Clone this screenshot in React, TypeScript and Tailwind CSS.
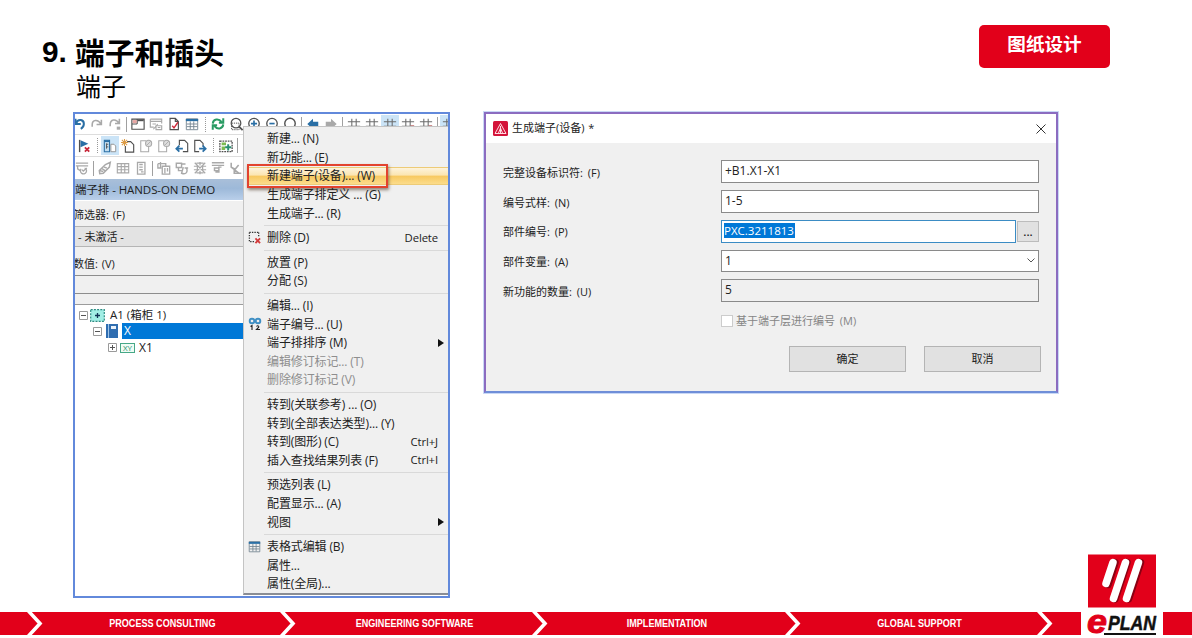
import { ReactNode } from "react";
import clsx from "clsx";

type IconName =
  | "undo" | "redo" | "redoList" | "layout" | "layoutOff" | "pageCheck" | "table" | "refresh" | "zoomArea" | "zoomIn" | "zoomOut"
  | "zoomFit" | "back" | "forward" | "grid" | "gridDot" | "flag" | "tree" | "newPage" | "pageOff" | "pageBack" | "pageNext" | "plc"
  | "filterOff" | "eraser" | "gridOff" | "device" | "copyOff" | "rotateOff" | "burst" | "alignOff" | "axis";

const GREY = "#a9a9a9";
const DARK = "#505050";
const BLUE = "#2a6fa5";

const hash = <path d="M5.5 2v12M10.5 2v12M1 5.5h14M1 10.5h14" stroke="#6b6b6b" strokeWidth="1.2" />;
const page = (color: string) => <path d="M3.5 1.5h6l3.500 3.500v9.500h-9.500zM9.500 1.500v3.500H13" stroke={color} strokeWidth="1.3" />;

const icons: Record<IconName, ReactNode> = {
  undo: <path d="M4 2v6h6M4.5 7.5C7 1 14 3 13.5 8.500c-.3 3-1.500 4-3.500 5" stroke={BLUE} strokeWidth="2.3" />,
  redo: <path d="M13 3v5.500H7.500M12.500 8C9 2 2.500 3 2.500 9v2" stroke={GREY} strokeWidth="1.8" />,
  redoList: (
    <>
      <path d="M13 2v5.500H8M12.500 7C9 1.500 2.500 2.500 2.500 9v1.500" stroke={GREY} strokeWidth="1.800" />
      <path d="M10 11h4v3.500h-4z" fill={GREY} />
    </>
  ),
  layout: (
    <>
      <path d="M1 2.500h14v11.500H1zM7 3v5M1 8h6" stroke={DARK} strokeWidth="1.300" />
      <path d="M7.500 3.800h7" stroke={DARK} strokeWidth="2" />
      <path d="M2 3.500h4.500V7H2z" fill="#e8a5a2" />
    </>
  ),
  layoutOff: <path d="M1.500 2.500h13v5M1.500 2.500v9h4M2 5h12M4 8h4M10 8l-5 6M8 10h6.500v4.500H8zM10 12h3" stroke={GREY} strokeWidth="1.300" />,
  pageCheck: (
    <>
      {page(DARK)}
      <path d="m6 10 2 2.500L12.500 6" stroke="#cf2b3b" strokeWidth="1.600" />
    </>
  ),
  table: (
    <>
      <path d="M1.500 2h13v12.500h-13zM6 5v9M10 5v9M2 8h12M2 11h12" stroke="#70818e" strokeWidth="1" />
      <path d="M1 3.500h14" stroke={BLUE} strokeWidth="2.500" />
    </>
  ),
  refresh: (
    <path d="M2 7.500C2.500 2 9 1.500 12 5.500M14 1.500V6.500H9M14 8.500C13.500 14 7 14.500 4 10.500M2 14.500v-5h5" stroke="#299b63" strokeWidth="2.300" />
  ),
  zoomArea: (
    <>
      <circle cx="8" cy="7" r="5.500" stroke={DARK} strokeWidth="1.400" />
      <path d="m11.500 11 4 4" stroke={DARK} strokeWidth="2" />
      <path d="M3 7h8.500v7.500H3z" stroke={DARK} strokeWidth="1.100" strokeDasharray="1.500 1" />
    </>
  ),
  zoomIn: (
    <>
      <circle cx="8" cy="7.500" r="6" stroke={DARK} strokeWidth="1.500" />
      <path d="M8 4v7M4.500 7.500h7" stroke={BLUE} strokeWidth="1.900" />
    </>
  ),
  zoomOut: (
    <>
      <circle cx="8" cy="7.500" r="6" stroke={DARK} strokeWidth="1.500" />
      <path d="M5 7.500h6" stroke={BLUE} strokeWidth="1.900" />
    </>
  ),
  zoomFit: <circle cx="8" cy="7.500" r="6" stroke={DARK} strokeWidth="1.600" />,
  back: <path d="M8 2 1.500 8 8 14v-3.500h6v-5H8z" fill={BLUE} />,
  forward: <path d="m8 2 6.500 6L8 14v-3.500H2v-5h6z" fill={GREY} />,
  grid: hash,
  gridDot: (
    <>
      {hash}
      <path d="M11 9.500h4v2h-4z" fill="#c96b6b" />
    </>
  ),
  flag: (
    <>
      <path d="M3 1v14" stroke={DARK} strokeWidth="1.600" />
      <path d="m4 1.500 9 4L4 9.500z" fill={BLUE} />
      <path d="m9 9.500 5 5M14 9.500l-5 5" stroke="#c8283a" strokeWidth="2" />
    </>
  ),
  tree: (
    <>
      <path d="M1.500 1.500h6v13h-6z" stroke={BLUE} fill="#c2dced" strokeWidth="1.200" />
      <path d="M1.500 2.500h6" stroke={BLUE} strokeWidth="2" />
      <path d="M4 5v6M4 6h2M4 9h2" stroke={DARK} />
      <path d="M9 6h3.500l2 2v6.500H9z" stroke="#8b8b8b" fill="#fff" />
    </>
  ),
  newPage: (
    <>
      <path d="M7 3h4l3.500 3.500v8.500H5V8" stroke={DARK} strokeWidth="1.300" />
      <path d="M4 0v8M0 4h8M1 1l6 6M7 1 1 7" stroke="#dc9b45" strokeWidth="1.200" />
    </>
  ),
  pageOff: (
    <>
      <path d="M8 2H2v12.500h9V9" stroke={GREY} strokeWidth="1.200" />
      <circle cx="11" cy="5" r="3.500" stroke={GREY} fill="#ddd" strokeWidth="1.200" />
      <path d="m8.500 7.500 5-5" stroke={GREY} />
    </>
  ),
  pageBack: (
    <>
      <path d="M5 7V1.500h6L14.500 5v9.500H9" stroke={DARK} strokeWidth="1.300" />
      <path d="M9 11H1.500M5 7.500 1.500 11 5 14.500" stroke={BLUE} strokeWidth="2" />
    </>
  ),
  pageNext: (
    <>
      <path d="M7 14.500H2v-13h6L11.500 5v3" stroke={DARK} strokeWidth="1.300" />
      <path d="M7 11h7.500M11 7.500l3.500 3.500-3.500 3.500" stroke={BLUE} strokeWidth="2" />
    </>
  ),
  plc: (
    <>
      <path d="M1 2.500h14v12H1z" stroke={DARK} strokeWidth="1.500" strokeDasharray="2 1" />
      <path d="M3 4h5v3H3zM3 8.500h4v4H3z" fill="#7dbb52" />
      <path d="M10.500 6v7M7 9.500h7" stroke="#278e70" strokeWidth="2.200" />
    </>
  ),
  filterOff: <path d="M1 2.500h14M1 5.500h14M3 6v3l3 2M7 9a3.500 3.500 0 1 0 4-1M8 10l1.500 1.500L13.500 8" stroke={GREY} strokeWidth="1.500" />,
  eraser: <path d="m1.500 11 7-7 5.500-2.500-1 5.500-7 7-4 .5zM5 9l3 2M7 7l3 1M2 11l4 1" stroke={GREY} strokeWidth="1.700" />,
  gridOff: <path d="M1.500 3h13v10.500h-13zM6 3v10M10 3v10M2 6.500h12M2 10h12" stroke={GREY} strokeWidth="1.300" />,
  device: <path d="M4 1.500h8.500v13.500H4zM6 4h4M6 7h4M6 10h4M8 12.500h3" stroke={GREY} strokeWidth="1.500" />,
  copyOff: <path d="M1 3h9v3M1 3v5h4M4 1v7M6 6h8.500v9H6zM9 8v6M12 8v4" stroke={GREY} strokeWidth="1.500" />,
  rotateOff: <path d="M1.500 2.500h6v5h-6zM4 8v3h5M7 3.500h5M9.500 7l-2 7c5.500 2 7.500-2 5.500-6M11 8h4" stroke={GREY} strokeWidth="1.600" />,
  burst: <path d="M2 2l12 12M14 2 2 14M8 1v4M8 11v4M1 6h4v4H1M15 6h-4v4h4M4 2.500h8M4 13.500h8" stroke={GREY} strokeWidth="1.400" />,
  alignOff: <path d="M1 2h14M1 5h14M4 8h5v3H4zM12 7H9v5.500H5" stroke={GREY} strokeWidth="1.700" />,
  axis: <path d="M2.500 2v5l9 7M2.500 7 7 9.500l4-5M6 9v5h8" stroke={GREY} strokeWidth="1.800" />,
};

function Icon({ name, active }: { name: IconName; active?: boolean }) {
  return (
    <span className={clsx("flex h-[19px] w-[18px] shrink-0 items-center justify-center", active && "bg-[#cbe4f7]")}>
      <svg viewBox="0 0 16 16" width="14" height="14" fill="none">
        {icons[name]}
      </svg>
    </span>
  );
}

function Bar({ wide }: { wide?: boolean }) {
  return (
    <span className={clsx("flex h-full shrink-0 items-center justify-center", wide ? "w-2" : "w-[5px]")}>
      <span className={clsx("h-[15px] border-l", wide ? "border-dotted border-[#999]" : "border-[#a0a0a0]")} />
    </span>
  );
}

type MenuEntry = { label: string; keys?: string; disabled?: boolean; submenu?: boolean; icon?: ReactNode; selected?: boolean };

const menu: MenuEntry[][] = [
  [
    { label: "新建... (N)" },
    { label: "新功能... (E)" },
    { label: "新建端子(设备)... (W)", selected: true },
    { label: "生成端子排定义 ... (G)" },
    { label: "生成端子... (R)" },
  ],
  [
    {
      label: "删除 (D)",
      keys: "Delete",
      icon: (
        <svg viewBox="0 0 14 14" width="13" height="13" fill="none">
          <path d="M1.500 1.500h10M1.500 1.500v10h6M11.500 1.500v5" stroke="#333" strokeWidth="1.400" strokeDasharray="1.500 1.200" />
          <path d="m8 8 5 5M13 8l-5 5" stroke="#d23a3a" strokeWidth="2" />
        </svg>
      ),
    },
  ],
  [{ label: "放置 (P)" }, { label: "分配 (S)" }],
  [
    { label: "编辑... (I)" },
    {
      label: "端子编号... (U)",
      icon: (
        <svg viewBox="0 0 14 14" width="14" height="14" fill="none">
          <circle cx="4" cy="4" r="2.300" stroke="#3f8fc4" strokeWidth="1.900" />
          <circle cx="10" cy="4" r="2.300" stroke="#3f8fc4" strokeWidth="1.900" />
          <path d="M2.500 9.500 4 8.500V13M8.500 9.500c1-1.500 3-.500 2 1l-2 2h3.500" stroke="#222" strokeWidth="1.100" />
        </svg>
      ),
    },
    { label: "端子排排序 (M)", submenu: true },
    { label: "编辑修订标记... (T)", disabled: true },
    { label: "删除修订标记 (V)", disabled: true },
  ],
  [
    { label: "转到(关联参考) ... (O)" },
    { label: "转到(全部表达类型)... (Y)" },
    { label: "转到(图形) (C)", keys: "Ctrl+J" },
    { label: "插入查找结果列表 (F)", keys: "Ctrl+I" },
  ],
  [{ label: "预选列表 (L)" }, { label: "配置显示... (A)" }, { label: "视图", submenu: true }],
  [
    {
      label: "表格式编辑 (B)",
      icon: (
        <svg viewBox="0 0 16 16" width="13" height="13" fill="none">
          {icons.table}
        </svg>
      ),
    },
    { label: "属性..." },
    { label: "属性(全局)..." },
  ],
];

function ContextMenu() {
  return (
    <div className="absolute top-3 left-[168px] h-[469px] w-[205px] border-t border-b-2 border-l border-[#c4c4c4] border-b-[#8a8d94] bg-[#f0f0f0] pt-[2.500px] pl-px text-[12px] tracking-[-0.120px] text-[#222]">
      {menu.map((group, i) => (
        <div key={i}>
          {i > 0 && (
            <div className="ml-[19px] flex h-[6px] items-center">
              <div className="h-px w-full bg-[#d9d9d9]" />
            </div>
          )}
          {group.map((item) => (
            <div
              key={item.label}
              className={clsx(
                "relative flex h-[18.6px] items-center leading-[18px] whitespace-pre",
                item.selected &&
                  "ml-[3px] border-y border-[#edcb77] bg-[linear-gradient(#fdf3dc_0%,#fbe5b1_45%,#f7c860_50%,#fbdc8c_100%)]",
                item.disabled && "text-[#8e8e8e]"
              )}
            >
              <span className={clsx("flex shrink-0 justify-center", item.selected ? "w-[19px]" : "mr-[3px] w-[19px]")}>{item.icon}</span>
              <span className="pt-px">{item.label}</span>
              {item.keys && <span className="mr-[10px] ml-auto text-[11.300px]">{item.keys}</span>}
              {item.submenu && (
                <svg className="mr-[4px] ml-auto" viewBox="0 0 6 8" width="6" height="8">
                  <path d="M0 0l6 4-6 4z" fill="#111" />
                </svg>
              )}
              {item.selected && (
                <span className="absolute -top-[4px] -left-px h-[24px] w-[141px] border-2 border-[#e2432f] shadow-[1px_2px_3px_rgba(80,60,40,0.6)]" />
              )}
            </div>
          ))}
        </div>
      ))}
    </div>
  );
}

function Toggle({ open }: { open?: boolean }) {
  return (
    <svg viewBox="0 0 9 9" width="9" height="9" fill="none" stroke="#9a9a9a">
      <path d="M.5.5h8v8h-8z" fill="#fff" />
      <path d={open ? "M2 4.500h5" : "M2 4.500h5M4.500 2v5"} stroke="#555" />
    </svg>
  );
}

function Navigator() {
  return (
    <section className="relative ml-[73px] h-[486px] w-[377px] shrink-0 overflow-hidden border-2 border-[#6289db] bg-white text-[12px] text-[#222]">
      <div className="-ml-[5px] flex h-[21px] w-[400px] items-center border-b border-[#ddd]">
        <Icon name="undo" /><Icon name="redo" /><Icon name="redoList" /><Bar />
        <Icon name="layout" /><Icon name="layoutOff" /><Icon name="pageCheck" /><Icon name="table" /><Bar wide />
        <Icon name="refresh" /><Icon name="zoomArea" /><Icon name="zoomIn" /><Icon name="zoomOut" /><Icon name="zoomFit" /><Bar />
        <Icon name="back" /><Icon name="forward" /><Bar />
        <Icon name="grid" /><Icon name="grid" /><Icon name="grid" active /><Icon name="gridDot" /><Icon name="gridDot" /><Bar />
        <Icon name="grid" active />
      </div>
      <div className="flex h-[22px] items-center border-b border-[#ddd]">
        <Icon name="flag" /><Bar wide />
        <Icon name="tree" active /><Icon name="newPage" /><Icon name="pageOff" /><Icon name="pageOff" /><Icon name="pageBack" /><Icon name="pageNext" />
        <Bar wide /><Icon name="plc" /><Bar />
      </div>
      <div className="-ml-0.5 flex h-[22px] items-center">
        <Icon name="filterOff" /><Bar /><Icon name="eraser" /><Icon name="gridOff" /><Icon name="device" /><Bar />
        <Icon name="copyOff" /><Icon name="rotateOff" /><Icon name="burst" /><Icon name="alignOff" /><Icon name="axis" />
      </div>

      <div className="w-[168px] bg-[#f0f0f0] whitespace-pre">
        <div className="h-[22px] border-b border-white bg-[linear-gradient(#a9bfd9,#9db9d9_45%,#b9cfea)] text-[11.500px] leading-[22px] tracking-[-0.080px]">
          端子排 - HANDS-ON DEMO
        </div>
        <div className="-ml-0.5 h-[25px] pt-[5px] text-[11px] leading-[18px] [word-spacing:1px]">筛选器: (F)</div>
        <div className="h-[21px] border-y border-[#b5b5b5] bg-[#e3e3e3] pl-[3px] text-[11px] leading-[20px]">- 未激活 -</div>
        <div className="-ml-0.5 h-[28px] pt-[8px] text-[11px] leading-[18px] [word-spacing:1px]">数值: (V)</div>
        <div className="h-[19px] border-y border-[#8d8d8d]" />
        <div className="h-[11px] border-b border-[#9c9c9c]" />
      </div>

      <div className="w-[168px] pt-[2px] text-[11.500px] leading-[16px]">
        <div className="flex h-4 items-center pl-[4px]">
          <Toggle open />
          <svg className="ml-[2px]" viewBox="0 0 15 13" width="15" height="13" fill="#a2eee5">
            <path d="M.7.7h13.600v11.600H.7z" stroke="#2e8c83" strokeWidth="1.200" strokeDasharray="2 1.200" />
            <path d="M7.500 4v5M5 6.500h5" stroke="#135" strokeWidth="1.300" />
          </svg>
          <span className="ml-[5px]">A1 (箱柜 1)</span>
        </div>
        <div className="flex h-4 items-center pl-[18px]">
          <Toggle open />
          <svg className="ml-[4px]" viewBox="0 0 12 14" width="12" height="14">
            <path d="M0 0h12v14H0z" fill="#2f6db0" />
            <path d="M2.500 0v14" stroke="#9dc3e8" />
            <path d="M5 2h5v3H5z" fill="#e8f1fa" />
          </svg>
          <span className="ml-[4px] h-4 flex-1 bg-[#0078d7] pl-[2px] text-[12px] text-white">X</span>
        </div>
        <div className="flex h-[17px] items-center pl-[33px]">
          <Toggle />
          <svg className="ml-[3px]" viewBox="0 0 15 10" width="15" height="10">
            <rect x=".5" y=".5" width="14" height="9" fill="#effcf4" stroke="#46a887" />
            <text x="7.500" y="8" fontSize="8" textAnchor="middle" fill="#2b8f70" fontFamily="Open Sans, sans-serif">XY</text>
          </svg>
          <span className="ml-[4px] text-[12px]">X1</span>
        </div>
      </div>
      <ContextMenu />
    </section>
  );
}

function Row({ label, children }: { label: string; children: ReactNode }) {
  return (
    <div className="flex h-[29.700px] items-center">
      <span className="w-[218px] shrink-0 pt-[2px] text-[11px] whitespace-pre [word-spacing:2px]">{label}</span>
      {children}
    </div>
  );
}

function TerminalDialog() {
  return (
    <section className="ml-[34px] flex h-[281px] w-[574px] shrink-0 flex-col border-2 border-[#8b6cc0] border-b-[#6f8ed8] bg-[#f0f0f0] text-[11.500px] text-[#222] outline-1 outline-[#c9d8f6]">
      <header className="flex h-[29px] items-center bg-white pr-[10px] pl-[7px]">
        <svg viewBox="0 0 15 15" width="15" height="15">
          <rect width="15" height="15" rx="1.500" fill="#d4143a" />
          <path d="M7.500 2.500 13 12.500H2zM7.500 5v7M5.500 12 7.500 7l2 5" stroke="#ffdce2" fill="none" />
        </svg>
        <span className="ml-[4px] text-[11px] [word-spacing:1px]">生成端子(设备) *</span>
        <svg className="ml-auto" viewBox="0 0 10 10" width="10" height="10">
          <path d="m.5.5 9 9M9.500.5l-9 9" stroke="#333" />
        </svg>
      </header>
      <div className="px-[17px] pt-[14px] leading-[18px]">
        <Row label="完整设备标识符: (F)">
          <div className="h-[23px] w-[319px] border border-[#8a8a8a] bg-white pl-[3px] text-[12px] leading-[20px]">+B1.X1-X1</div>
        </Row>
        <Row label="编号式样: (N)">
          <div className="h-[23px] w-[319px] border border-[#8a8a8a] bg-white pl-[3px] text-[12px] leading-[20px]">1-5</div>
        </Row>
        <Row label="部件编号: (P)">
          <div className="h-[23px] w-[296px] border border-[#3b8cc4] bg-white pt-[2px] pl-[2px] leading-[15px]">
            <span className="inline-block bg-[#0078d7] pr-px text-white">PXC.3211813</span>
          </div>
          <div className="ml-[1px] h-[21px] w-[22px] border border-[#bcbcbc] bg-[#e1e1e1] text-center leading-[20px] font-semibold">...</div>
        </Row>
        <Row label="部件变量: (A)">
          <div className="flex h-[22px] w-[319px] items-center justify-between border border-[#8a8a8a] bg-white px-[3px] text-[12px]">
            1
            <svg viewBox="0 0 8 5" width="8" height="5" fill="none">
              <path d="m.5.5 3.500 3.500L7.500.5" stroke="#555" />
            </svg>
          </div>
        </Row>
        <Row label="新功能的数量: (U)">
          <div className="h-[23px] w-[319px] border border-[#8a8a8a] pl-[3px] text-[12px] leading-[20px]">5</div>
        </Row>
        <div className="mt-[6px] ml-[218px] flex h-[20px] items-center text-[11px] text-[#858585] [word-spacing:2px]">
          <span className="mr-[3px] h-[12px] w-[12px] border border-[#ccc] bg-white" />
          基于端子层进行编号 (M)
        </div>
        <div className="mr-px mt-[15px] flex text-[11px]">
          <button className="mr-[18px] ml-[286px] h-[26px] w-[117px] shrink-0 border border-[#b4b4b4] bg-[#e1e1e1]">确定</button>
          <button className="h-[26px] w-[117px] shrink-0 border border-[#b4b4b4] bg-[#e1e1e1]">取消</button>
        </div>
      </div>
    </section>
  );
}

function Chevron() {
  return (
    <svg viewBox="0 0 18 23" width="18" height="23" fill="none" className="shrink-0">
      <path d="M1-1.500 13 11.500 1 24.500" stroke="#fff" strokeWidth="3.600" />
    </svg>
  );
}

const steps = ["PROCESS CONSULTING", "ENGINEERING SOFTWARE", "IMPLEMENTATION", "GLOBAL SUPPORT"];

function Footer() {
  return (
    <footer className="mt-auto flex h-[84px] shrink-0 items-start">
      <div className="mt-[58px] flex h-[23px] w-[1081px] shrink-0 bg-[#e2001a]">
        <div className="flex w-[45px] shrink-0 justify-end"><Chevron /></div>
        {steps.map((step) => (
          <div key={step} className="flex w-[252.500px] shrink-0 items-center">
            <span className="flex flex-1 justify-center">
              <span className="scale-x-[0.790] font-['Liberation_Sans'] text-[11.500px] font-bold whitespace-nowrap text-white">{step}</span>
            </span>
            <Chevron />
          </div>
        ))}
      </div>
      <svg viewBox="0 0 82 84" width="82" height="84" className="shrink-0">
        <rect x="7" y="0.500" width="68" height="53" fill="#e2001a" />
        <g strokeLinecap="round" fill="none">
          <path d="M34 8.500 27 30.500M46 8.500 34 45M59.500 8.500 47.500 45" stroke="#8a0013" strokeWidth="7.500" />
          <path d="M32 8.500 25 29.500M44.500 8.500 32.500 44.500M57.500 8.500 45.500 44.500" stroke="#fff" strokeWidth="7.500" />
        </g>
        <text x="6" y="78.500" fontSize="34" fontWeight="700" fontStyle="italic" fill="#e2001a" stroke="#e2001a" fontFamily="Liberation Sans, sans-serif" textLength="20" lengthAdjust="spacingAndGlyphs">e</text>
        <text x="27" y="75.500" fontSize="20" fontWeight="700" fontStyle="italic" fill="#111" stroke="#111" strokeWidth=".5" fontFamily="Liberation Sans, sans-serif" textLength="48" lengthAdjust="spacingAndGlyphs">PLAN</text>
        <path d="M23 80h52" stroke="#111" strokeWidth="2" />
      </svg>
      <div className="mt-[58px] h-[23px] flex-1 bg-[#e2001a]" />
    </footer>
  );
}

export default function App() {
  return (
    <main className="flex h-[638px] w-[1192px] flex-col overflow-hidden bg-white font-['Open_Sans','Noto_Sans_CJK_SC',sans-serif]">
      <div className="flex h-[112px] shrink-0 items-start justify-between pr-[82px] pl-[42px]">
        <div className="pt-[31px] text-black">
          <h1 className="flex h-[40px] items-center text-[29.800px] leading-[40px] font-bold">
            <span className="w-[33px] pt-px font-['Liberation_Sans']">9.</span>
            <span className="font-['Noto_Sans_CJK_SC']">端子和插头</span>
          </h1>
          <p className="ml-[34px] font-['Noto_Sans_CJK_SC'] text-[25px] leading-[29px]">端子</p>
        </div>
        <div className="mt-[25px] h-[43px] w-[131px] rounded-[5px] bg-[#e2001a] text-center font-['Noto_Sans_CJK_SC'] text-[18.600px] leading-[36px] font-bold text-white">
          图纸设计
        </div>
      </div>
      <div className="flex h-[442px] shrink-0 items-start">
        <Navigator />
        <TerminalDialog />
      </div>
      <Footer />
    </main>
  );
}
